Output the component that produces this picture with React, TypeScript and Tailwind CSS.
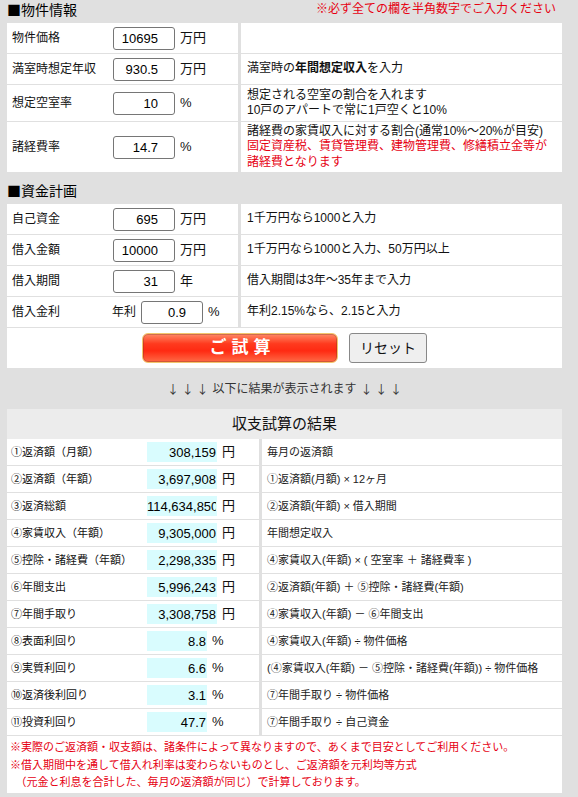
import React from 'react';

const font = "font-['Liberation_Sans','Noto_Sans_CJK_JP',sans-serif]";
const cjk = "font-['Noto_Sans_CJK_JP',sans-serif]";

type InputRow = {
  label: string;
  value: string;
  unit: string;
  prefix?: string;
  height: string;
  desc: React.ReactNode;
};

const propertyRows: InputRow[] = [
  { label: '物件価格', value: '10695', unit: '万円', height: 'h-[30px]', desc: null },
  {
    label: '満室時想定年収',
    value: '930.5',
    unit: '万円',
    height: 'h-[30px]',
    desc: (
      <>
        満室時の<b>年間想定収入</b>を入力
      </>
    ),
  },
  {
    label: '想定空室率',
    value: '10',
    unit: '%',
    height: 'h-[36px]',
    desc: (
      <>
        想定される空室の割合を入れます
        <br />
        10戸のアパートで常に1戸空くと10%
      </>
    ),
  },
  {
    label: '諸経費率',
    value: '14.7',
    unit: '%',
    height: 'h-[50px]',
    desc: (
      <>
        諸経費の家賃収入に対する割合(通常10%～20%が目安)
        <br />
        <span className="text-[#e60012]">
          固定資産税、賃貸管理費、建物管理費、修繕積立金等が
          <br />
          諸経費となります
        </span>
      </>
    ),
  },
];

const fundRows: InputRow[] = [
  { label: '自己資金', value: '695', unit: '万円', height: 'h-[30px]', desc: '1千万円なら1000と入力' },
  { label: '借入金額', value: '10000', unit: '万円', height: 'h-[30px]', desc: '1千万円なら1000と入力、50万円以上' },
  { label: '借入期間', value: '31', unit: '年', height: 'h-[30px]', desc: '借入期間は3年～35年まで入力' },
  { label: '借入金利', prefix: '年利', value: '0.9', unit: '%', height: 'h-[30px]', desc: '年利2.15%なら、2.15と入力' },
];

const results = [
  { label: '①返済額（月額）', value: '308,159', unit: '円', desc: '毎月の返済額' },
  { label: '②返済額（年額）', value: '3,697,908', unit: '円', desc: '①返済額(月額) × 12ヶ月' },
  { label: '③返済総額', value: '114,634,850', unit: '円', desc: '②返済額(年額) × 借入期間' },
  { label: '④家賃収入（年額）', value: '9,305,000', unit: '円', desc: '年間想定収入' },
  { label: '⑤控除・諸経費（年額）', value: '2,298,335', unit: '円', desc: '④家賃収入(年額) × ( 空室率 ＋ 諸経費率 )' },
  { label: '⑥年間支出', value: '5,996,243', unit: '円', desc: '②返済額(年額) ＋ ⑤控除・諸経費(年額)' },
  { label: '⑦年間手取り', value: '3,308,758', unit: '円', desc: '④家賃収入(年額) － ⑥年間支出' },
  { label: '⑧表面利回り', value: '8.8', unit: '%', desc: '④家賃収入(年額) ÷ 物件価格' },
  { label: '⑨実質利回り', value: '6.6', unit: '%', desc: '(④家賃収入(年額) － ⑤控除・諸経費(年額)) ÷ 物件価格' },
  { label: '⑩返済後利回り', value: '3.1', unit: '%', desc: '⑦年間手取り ÷ 物件価格' },
  { label: '⑪投資利回り', value: '47.7', unit: '%', desc: '⑦年間手取り ÷ 自己資金' },
];

const NumberInput = ({ value }: { value: string }) => (
  <input
    type="text"
    defaultValue={value}
    className="w-[62px] h-[23px] border border-[#767676] rounded-[3px] bg-white text-right pr-[16px] text-[13px] text-black outline-none"
  />
);

const FormRows = ({ rows }: { rows: InputRow[] }) => (
  <div className="flex flex-col gap-[1px]">
    {rows.map((r) => (
      <div key={r.label} className={`grid grid-cols-[231px_321px] gap-x-[3px] ${r.height}`}>
        <div className="bg-white flex items-center text-[12px] text-[#111]">
          {r.prefix ? (
            <>
              <span className="w-[105px] pl-[5px]">{r.label}</span>
              <span>{r.prefix}</span>
              <span className="ml-[5px] flex">
                <NumberInput value={r.value} />
              </span>
            </>
          ) : (
            <>
              <span className="w-[106px] pl-[5px]">{r.label}</span>
              <NumberInput value={r.value} />
            </>
          )}
          <span className="ml-[5px] text-[13px]">{r.unit}</span>
        </div>
        <div className="bg-white flex items-center pl-[6px] text-[12px] leading-[15.5px] text-[#111]">
          <div>{r.desc}</div>
        </div>
      </div>
    ))}
  </div>
);

export default function App() {
  return (
    <div className={`min-h-screen bg-[#e0e0e0] ${font}`}>
      <div className="ml-[7px] w-[555px] pb-[4px]">
        {/* 物件情報 */}
        <div className="h-[23px] pt-[1px] flex justify-between items-start">
          <h2 className={`text-[14px] leading-[17px] text-black ${cjk}`}>■物件情報</h2>
          <p className="text-[12px] leading-[16px] text-[#e60012] mr-[6px]">
            ※必ず全ての欄を半角数字でご入力ください
          </p>
        </div>
        <FormRows rows={propertyRows} />

        {/* 資金計画 */}
        <div className="h-[32px] pt-[10px]">
          <h2 className={`text-[14px] leading-[16px] text-black ${cjk}`}>■資金計画</h2>
        </div>
        <FormRows rows={fundRows} />

        <div className="mt-[1px] h-[40px] bg-white flex items-center justify-center gap-[11px]">
          <button className="w-[196px] h-[30px] rounded-[6px] border border-[#f3c66b] bg-[linear-gradient(to_bottom,#ff8a66_0%,#ff3a1e_35%,#ff2a12_60%,#ff6a45_100%)] text-white font-bold text-[17px] tracking-[5px] pl-[5px] shadow-[inset_0_0_0_1px_rgba(120,60,40,0.35)]">
            ご試算
          </button>
          <button className="w-[78px] h-[30px] rounded-[3px] border border-[#888] bg-[#efefef] text-[14px] text-[#111]">
            リセット
          </button>
        </div>

        <div className="h-[41px] flex items-center justify-center text-[12px] text-[#333]">
          <span className={cjk}>↓ ↓ ↓</span>
          <span className="ml-[4px]">以下に結果が表示されます</span>
          <span className={`ml-[4px] ${cjk}`}>↓ ↓ ↓</span>
        </div>

        {/* 結果 */}
        <div className="h-[30px] bg-[#ececec] flex items-center justify-center text-[15px] text-[#111]">
          収支試算の結果
        </div>
        <div className="flex flex-col gap-[1px]">
          {results.map((r) => (
            <div key={r.label} className="grid grid-cols-[252px_300px] gap-x-[3px] h-[26px]">
              <div className="bg-white flex items-center">
                <span className="w-[140px] pl-[4px] text-[11px] text-[#111]">{r.label}</span>
                <input
                  readOnly
                  value={r.value}
                  className={`${r.unit === '%' ? 'w-[60px]' : 'w-[70px]'} h-[20px] bg-[#d9fcfe] text-right pr-[1px] text-[13px] text-black outline-none border-0`}
                />
                <span className="ml-[5px] text-[13px] text-[#111]">{r.unit}</span>
              </div>
              <div className="bg-white flex items-center pl-[5px] text-[11px] text-[#222]">{r.desc}</div>
            </div>
          ))}
        </div>

        <div className="mt-[1px] h-[57px] bg-white pt-[3px] pl-[3px] text-[11px] leading-[17.5px] text-[#e60012]">
          <p>※実際のご返済額・収支額は、諸条件によって異なりますので、あくまで目安としてご利用ください。</p>
          <p>※借入期間中を通して借入れ利率は変わらないものとし、ご返済額を元利均等方式</p>
          <p>　（元金と利息を合計した、毎月の返済額が同じ）で計算しております。</p>
        </div>
      </div>
    </div>
  );
}
